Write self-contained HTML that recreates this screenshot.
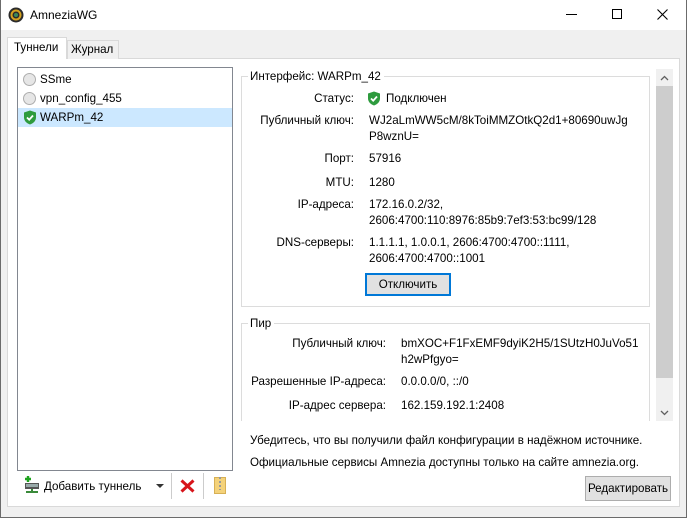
<!DOCTYPE html>
<html><head><meta charset="utf-8"><style>
*{margin:0;padding:0;box-sizing:border-box}
body{width:687px;height:518px;background:#f0f0f0;font-family:"Liberation Sans",sans-serif;font-size:11.6px;color:#000;position:relative;overflow:hidden}
.a{position:absolute;white-space:nowrap;line-height:15px}
.r{text-align:right}
</style></head><body>
<div class="a" style="left:0;top:0;width:687px;height:30px;background:#fff"></div>
<div class="a" style="left:0;top:0;width:687px;height:518px;border:1px solid #6b6b6b;border-top:none"></div>
<svg class="a" style="left:8px;top:7px" width="16" height="16"><circle cx="8" cy="8" r="7.5" fill="#2b2b2b"/><circle cx="8" cy="8" r="4.5" fill="none" stroke="#d6a21e" stroke-width="2"/><circle cx="8" cy="8" r="2" fill="#3a8a5a"/></svg>
<div class="a" style="left:30px;top:8px;font-size:12px">AmneziaWG</div>
<div class="a" style="left:566px;top:14px;width:11px;height:1px;background:#000"></div>
<div class="a" style="left:612px;top:9px;width:10px;height:10px;border:1px solid #000"></div>
<svg class="a" style="left:657px;top:9px" width="11" height="11"><path d="M0.5 0.5L10.5 10.5M10.5 0.5L0.5 10.5" stroke="#000" stroke-width="1.1"/></svg>
<div class="a" style="left:7px;top:58px;width:673px;height:449px;background:#fff;border:1px solid #d9d9d9"></div>
<div class="a" style="left:7px;top:37px;width:60px;height:22px;background:#fff;border:1px solid #d9d9d9;border-bottom:none"></div>
<div class="a" style="left:14px;top:40px">Туннели</div>
<div class="a" style="left:67px;top:40px;width:52px;height:19px;background:#f0f0f0;border:1px solid #d9d9d9;border-bottom:none"></div>
<div class="a" style="left:71px;top:42px">Журнал</div>
<div class="a" style="left:17px;top:67px;width:216px;height:404px;border:1px solid #828790;background:#fff"></div>
<div class="a" style="left:18px;top:108px;width:214px;height:19px;background:#cce8ff"></div>
<div class="a" style="left:23px;top:73px;width:13px;height:13px;border-radius:50%;background:#e6e6e6;border:1px solid #adadad"></div>
<div class="a" style="left:40px;top:72px">SSme</div>
<div class="a" style="left:23px;top:92px;width:13px;height:13px;border-radius:50%;background:#e6e6e6;border:1px solid #adadad"></div>
<div class="a" style="left:40px;top:91px">vpn_config_455</div>
<svg class="a" style="left:23px;top:110px" width="14" height="15"><path d="M7 0.5L13 2.5V7.5C13 11 10 13.5 7 14.5C4 13.5 1 11 1 7.5V2.5Z" fill="#2e9b3e"/><path d="M4 7.5L6.2 9.7L10 5.5" stroke="#fff" stroke-width="1.8" fill="none"/></svg>
<div class="a" style="left:40px;top:110px">WARPm_42</div>
<svg class="a" style="left:23px;top:476px" width="18" height="18"><rect x="2" y="7" width="14" height="6" fill="#555"/><rect x="3" y="8" width="12" height="3" fill="#9aa"/><rect x="8" y="13" width="2" height="3" fill="#3a8a3a"/><rect x="3" y="15" width="12" height="2" fill="#3a8a3a"/><path d="M5 0v6M2 3h6" stroke="#1fa31f" stroke-width="2.4"/></svg>
<div class="a" style="left:44px;top:479px">Добавить туннель</div>
<svg class="a" style="left:156px;top:484px" width="8" height="5"><path d="M0 0h8L4 4z" fill="#333"/></svg>
<div class="a" style="left:171px;top:473px;width:1px;height:26px;background:#ccc"></div>
<svg class="a" style="left:180px;top:479px" width="15" height="14"><path d="M1.5 1.5L13.5 12.5M13.5 1.5L1.5 12.5" stroke="#d7141a" stroke-width="3"/></svg>
<div class="a" style="left:203px;top:473px;width:1px;height:26px;background:#ccc"></div>
<div class="a" style="left:214px;top:477px;width:12px;height:17px;background:#f4d27a;border:1px solid #d7b055"></div>
<div class="a" style="left:219px;top:477px;width:2px;height:13px;background:repeating-linear-gradient(#999 0 2px,#f4d27a 2px 4px)"></div>
<div class="a" style="left:656px;top:69px;width:17px;height:352px;background:#f0f0f0"></div>
<div class="a" style="left:656px;top:86px;width:17px;height:292px;background:#cdcdcd"></div>
<svg class="a" style="left:660px;top:75px" width="9" height="6"><path d="M1 5L4.5 1.5L8 5" stroke="#606060" stroke-width="1.3" fill="none"/></svg>
<svg class="a" style="left:660px;top:410px" width="9" height="6"><path d="M1 1L4.5 4.5L8 1" stroke="#606060" stroke-width="1.3" fill="none"/></svg>
<div class="a" style="left:241px;top:76px;width:409px;height:231px;border:1px solid #dcdcdc"></div>
<div class="a" style="left:248px;top:69px;background:#fff;padding:0 3px 0 2px">Интерфейс: WARPm_42</div>
<div class="a r" style="left:240px;width:114px;top:91px">Статус:</div>
<svg class="a" style="left:367px;top:91px" width="14" height="15"><path d="M7 0.5L13 2.5V7.5C13 11 10 13.5 7 14.5C4 13.5 1 11 1 7.5V2.5Z" fill="#2e9b3e"/><path d="M4 7.5L6.2 9.7L10 5.5" stroke="#fff" stroke-width="1.8" fill="none"/></svg>
<div class="a" style="left:386px;top:91px">Подключен</div>
<div class="a r" style="left:240px;width:114px;top:113px">Публичный ключ:</div>
<div class="a" style="left:369px;top:113px;line-height:16px">WJ2aLmWW5cM/8kToiMMZOtkQ2d1+80690uwJg<br>P8wznU=</div>
<div class="a r" style="left:240px;width:114px;top:151px">Порт:</div>
<div class="a" style="left:369px;top:151px">57916</div>
<div class="a r" style="left:240px;width:114px;top:175px">MTU:</div>
<div class="a" style="left:369px;top:175px">1280</div>
<div class="a r" style="left:240px;width:114px;top:197px">IP-адреса:</div>
<div class="a" style="left:369px;top:197px;line-height:16px">172.16.0.2/32,<br>2606:4700:110:8976:85b9:7ef3:53:bc99/128</div>
<div class="a r" style="left:240px;width:114px;top:235px">DNS-серверы:</div>
<div class="a" style="left:369px;top:235px;line-height:16px">1.1.1.1, 1.0.0.1, 2606:4700:4700::1111,<br>2606:4700:4700::1001</div>
<div class="a" style="left:365px;top:273px;width:86px;height:23px;background:#e1e1e1;border:2px solid #0078d7;text-align:center;line-height:19px">Отключить</div>
<div class="a" style="left:241px;top:323px;width:409px;height:110px;border:1px solid #dcdcdc"></div>
<div class="a" style="left:248px;top:316px;background:#fff;padding:0 3px 0 2px">Пир</div>
<div class="a r" style="left:240px;width:146px;top:336px">Публичный ключ:</div>
<div class="a" style="left:401px;top:336px;line-height:16px">bmXOC+F1FxEMF9dyiK2H5/1SUtzH0JuVo51<br>h2wPfgyo=</div>
<div class="a r" style="left:240px;width:146px;top:374px">Разрешенные IP-адреса:</div>
<div class="a" style="left:401px;top:374px">0.0.0.0/0, ::/0</div>
<div class="a r" style="left:240px;width:146px;top:398px">IP-адрес сервера:</div>
<div class="a" style="left:401px;top:398px">162.159.192.1:2408</div>
<div class="a" style="left:240px;top:421px;width:433px;height:12px;background:#fff"></div>
<div class="a" style="left:250px;top:433px">Убедитесь, что вы получили файл конфигурации в надёжном источнике.</div>
<div class="a" style="left:250px;top:455px">Официальные сервисы Amnezia доступны только на сайте amnezia.org.</div>
<div class="a" style="left:585px;top:476px;width:86px;height:25px;background:#e1e1e1;border:1px solid #adadad;text-align:center;line-height:23px">Редактировать</div>
</body></html>
